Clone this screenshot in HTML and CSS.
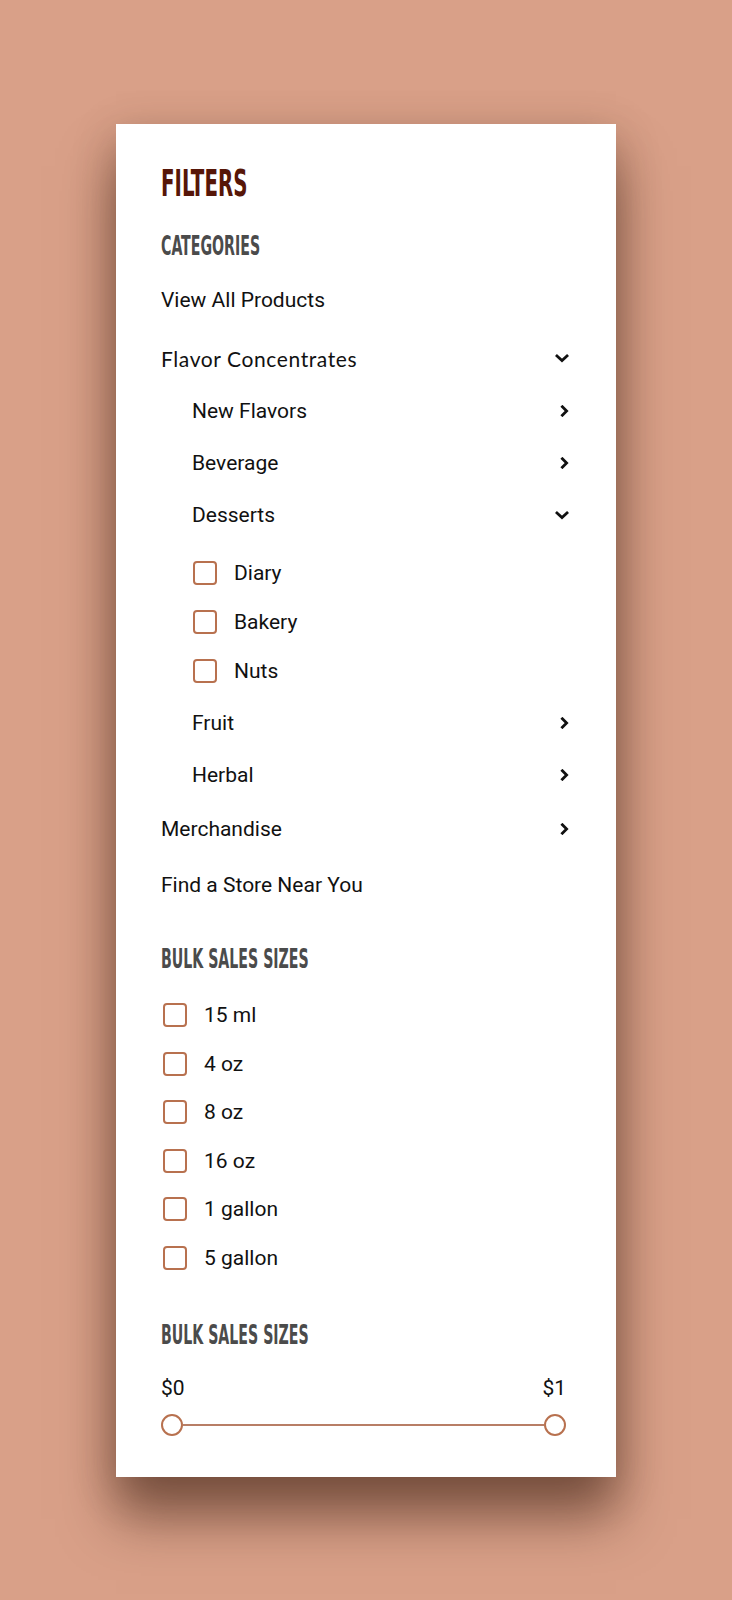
FILE: index.html
```html
<!DOCTYPE html>
<html lang="en">
<head>
<meta charset="utf-8">
<title>Filters</title>
<link rel="stylesheet" href="styles.css">
</head>
<body>
<div class="page">
  <aside class="card">
    <h1 class="title">FILTERS</h1>

    <h2 class="heading">CATEGORIES</h2>
    <ul class="cats">
      <li class="row top first"><span class="label">View All Products</span></li>
      <li class="row top flavor"><span class="label mul">Flavor Concentrates</span>
        <svg class="chev" viewBox="0 0 14 9" width="14" height="9"><path d="M2 2 L7 6.6 L12 2" fill="none" stroke="#111" stroke-width="2.8" stroke-linecap="square"/></svg>
      </li>
      <li class="row sub"><span class="label">New Flavors</span>
        <svg class="chev" viewBox="0 0 9 12" width="9" height="12"><path d="M2.4 1.8 L6.6 6 L2.4 10.2" fill="none" stroke="#111" stroke-width="2.8" stroke-linecap="square"/></svg>
      </li>
      <li class="row sub"><span class="label">Beverage</span>
        <svg class="chev" viewBox="0 0 9 12" width="9" height="12"><path d="M2.4 1.8 L6.6 6 L2.4 10.2" fill="none" stroke="#111" stroke-width="2.8" stroke-linecap="square"/></svg>
      </li>
      <li class="row sub"><span class="label">Desserts</span>
        <svg class="chev" viewBox="0 0 14 9" width="14" height="9"><path d="M2 2 L7 6.6 L12 2" fill="none" stroke="#111" stroke-width="2.8" stroke-linecap="square"/></svg>
      </li>
      <li class="checks nested">
        <label class="check"><span class="box"></span><span class="label">Diary</span></label>
        <label class="check"><span class="box"></span><span class="label">Bakery</span></label>
        <label class="check"><span class="box"></span><span class="label">Nuts</span></label>
      </li>
      <li class="row sub after-checks"><span class="label">Fruit</span>
        <svg class="chev" viewBox="0 0 9 12" width="9" height="12"><path d="M2.4 1.8 L6.6 6 L2.4 10.2" fill="none" stroke="#111" stroke-width="2.8" stroke-linecap="square"/></svg>
      </li>
      <li class="row sub"><span class="label">Herbal</span>
        <svg class="chev" viewBox="0 0 9 12" width="9" height="12"><path d="M2.4 1.8 L6.6 6 L2.4 10.2" fill="none" stroke="#111" stroke-width="2.8" stroke-linecap="square"/></svg>
      </li>
      <li class="row top"><span class="label">Merchandise</span>
        <svg class="chev" viewBox="0 0 9 12" width="9" height="12"><path d="M2.4 1.8 L6.6 6 L2.4 10.2" fill="none" stroke="#111" stroke-width="2.8" stroke-linecap="square"/></svg>
      </li>
      <li class="row top"><span class="label">Find a Store Near You</span></li>
    </ul>

    <h2 class="heading bulk">BULK SALES SIZES</h2>
    <div class="checks sizes">
      <label class="check"><span class="box"></span><span class="label">15 ml</span></label>
      <label class="check"><span class="box"></span><span class="label">4 oz</span></label>
      <label class="check"><span class="box"></span><span class="label">8 oz</span></label>
      <label class="check"><span class="box"></span><span class="label">16 oz</span></label>
      <label class="check"><span class="box"></span><span class="label">1 gallon</span></label>
      <label class="check"><span class="box"></span><span class="label">5 gallon</span></label>
    </div>

    <h2 class="heading price">BULK SALES SIZES</h2>
    <div class="range-labels"><span>$0</span><span>$1</span></div>
    <div class="slider">
      <span class="knob"></span>
      <span class="track"></span>
      <span class="knob"></span>
    </div>
  </aside>
</div>
</body>
</html>
```

FILE: styles.css
```css
* { box-sizing: border-box; }

html, body {
  margin: 0;
  padding: 0;
}

body {
  background: #d9a088;
  font-family: Roboto, "Liberation Sans", sans-serif;
  color: #111;
}

.page {
  padding: 124px 0 0 116px;
  min-height: 1600px;
}

.card {
  width: 500px;
  background: #fff;
  padding: 40px 50px 41px 45px;
  box-shadow: 0 42px 50px rgba(55, 28, 15, 0.5), 0 12px 40px rgba(70, 35, 20, 0.3);
}

.title,
.heading {
  margin: 0;
  font-family: "Liberation Sans Narrow", "DejaVu Sans Condensed", "Liberation Sans", sans-serif;
  font-weight: 700;
  transform-origin: left center;
  white-space: nowrap;
}

.title {
  font-size: 37px;
  line-height: 40px;
  height: 40px;
  color: #561608;
  transform: scaleX(0.595);
}

.heading {
  font-size: 26px;
  line-height: 30px;
  height: 30px;
  color: #4b4b4b;
  transform: scaleX(0.605);
  margin-top: 27px;
}

.heading.bulk { margin-top: 31px; }
.heading.price { margin-top: 38px; }

.cats {
  list-style: none;
  margin: 11px 0 0;
  padding: 0;
}

.row {
  display: flex;
  align-items: center;
  justify-content: space-between;
  font-size: 21px;
}

.row.top { height: 56px; }
.row.top.flavor { height: 54px; margin-top: 3px; }
.row.sub { height: 52px; padding-left: 31px; }
.row.after-checks { margin-top: 2px; }

.label.mul {
  font-family: Lato, "Noto Sans", sans-serif;
  font-size: 21px;
  letter-spacing: 0.6px;
}

.chev { flex: none; margin-right: -3px; }

.checks { display: flex; flex-direction: column; }
.checks.nested { padding-left: 32px; margin-top: 7px; }
.checks.sizes { margin-top: 17px; padding-left: 2px; }

.check {
  display: flex;
  align-items: center;
  gap: 17px;
  font-size: 21px;
}

.nested .check { height: 49px; }
.sizes .check { height: 48.5px; }

.box {
  flex: none;
  width: 24px;
  height: 24px;
  border: 2px solid #b8714f;
  border-radius: 4px;
}

.range-labels {
  display: flex;
  justify-content: space-between;
  margin-top: 26px;
  font-size: 21px;
  line-height: 24px;
}

.slider {
  display: flex;
  align-items: center;
  margin-top: 14px;
  height: 22px;
}

.knob {
  flex: none;
  width: 22px;
  height: 22px;
  border: 2px solid #b8714f;
  border-radius: 50%;
  background: #fff;
}

.track {
  flex: 1;
  height: 2px;
  background: #b87e66;
}
```
